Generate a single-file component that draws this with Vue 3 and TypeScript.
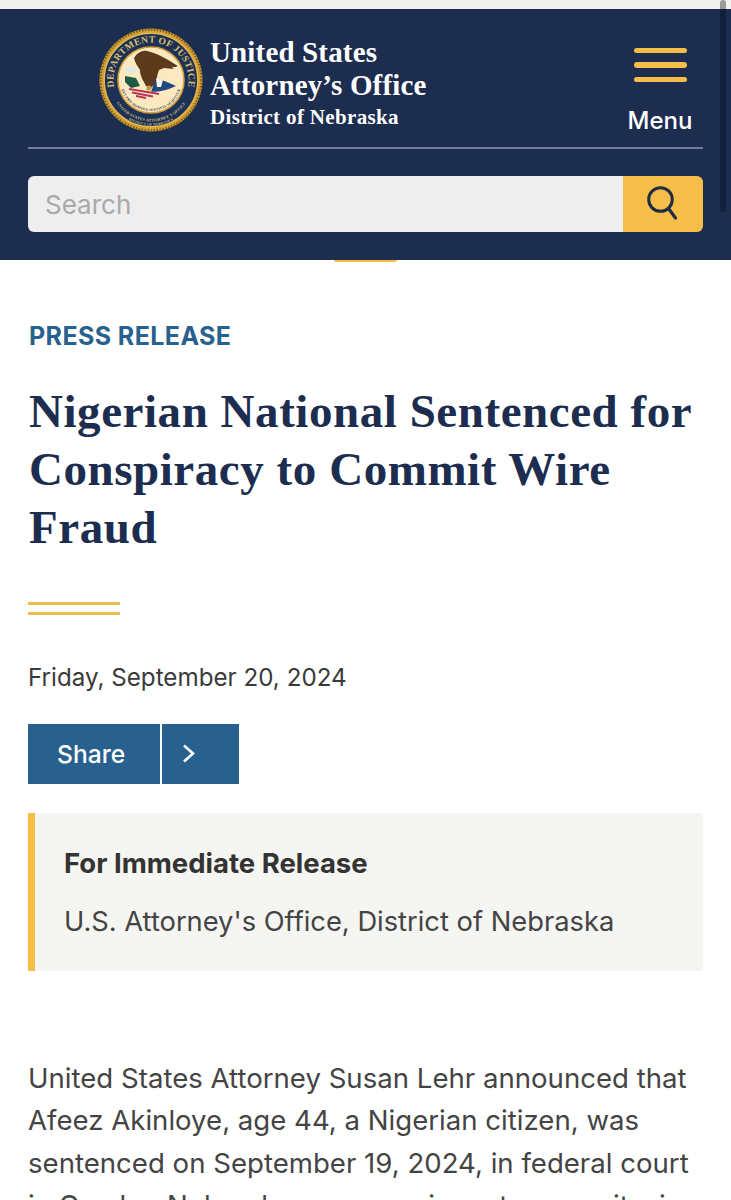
<script setup lang="ts">
const seal = 'DEPARTMENT OF JUSTICE'
</script>

<template>
  <div class="page">
    <div class="topstrip"></div>
    <header class="hdr">
      <div class="brandrow">
        <div class="brand">
          <svg class="seal" viewBox="0 0 104 104" aria-hidden="true">
            <defs>
              <path id="arcTop" d="M 18 67.8 A 37.5 37.5 0 1 1 86 67.8" />
              <path id="arcBot" d="M 13 66.2 A 41.5 41.5 0 0 0 91 66.2" />
              <path id="arcBot2" d="M 14.7 78.1 A 45.5 45.5 0 0 0 89.3 78.1" />
              <path id="arcIn" d="M 21 52 A 31 31 0 0 0 83 52" />
            </defs>
            <circle cx="52" cy="52" r="51.5" fill="#d09f36" />
            <circle cx="52" cy="52" r="50.4" fill="none" stroke="#7d5a1c" stroke-width="2" stroke-dasharray="1.5 1.5" />
            <circle cx="52" cy="52" r="46.8" fill="#1d3157" stroke="#e6b94f" stroke-width="1.4" />
            <text class="sealtext" fill="#dcbf6e" font-size="9.6"><textPath href="#arcTop" startOffset="50%" text-anchor="middle">{{ seal }}</textPath></text>
            <text class="sealtext" fill="#d8c583" font-size="3.9"><textPath href="#arcBot" startOffset="50%" text-anchor="middle">UNITED STATES ATTORNEY'S OFFICE</textPath></text>
            <text class="sealtext" fill="#d8c583" font-size="3.3"><textPath href="#arcBot2" startOffset="50%" text-anchor="middle">DISTRICT OF NEBRASKA</textPath></text>
            <circle cx="52" cy="52" r="33" fill="#fde9bf" stroke="#cf9f3b" stroke-width="1.6" />
            <path d="M24 41 L35 38 L40 44 L30 46 Z" fill="#e6e8e2" />
            <path d="M35 30 C38 25 43 22 48 23 C58 25 68 31 79 38 C78 39 75 39 73 39 L75 41 C71 41 68 40 65 40 L60 42 C58 47 58 51 56 56 L52 60 L47 58 C44 52 41 48 41 42 C39 39 36 35 35 30 Z" fill="#5e3a1d" />
            <path d="M26 48 L37 50 L41 58 L32 60 L26 54 Z" fill="#1f5c43" />
            <path d="M57 50 L68 54 L77 58 L70 61 C64 63 58 64 52 64 Z" fill="#224a80" />
            <path d="M57 50 L64 52 L62 59 L58 59 Z" fill="#f6f3e8" />
            <path d="M28 60 L62 65 C54 70 46 71 40 70 C34 68 31 64 28 60 Z" fill="#f7ecdf" />
            <path d="M30 61 L60 66 M33 64.5 L54 68.5 M37 68 L47 70" stroke="#bb3748" stroke-width="2" fill="none" />
            <circle cx="50" cy="60" r="2.6" fill="#c2983c" />
            <text class="sealtext" fill="#2c3345" font-size="3.6"><textPath href="#arcIn" startOffset="50%" text-anchor="middle">QUI PRO DOMINA JUSTITIA SEQUITUR</textPath></text>
          </svg>
          <div class="names">
            <div class="n1">United States</div>
            <div class="n1">Attorney’s Office</div>
            <div class="n2">District of Nebraska</div>
          </div>
        </div>
        <div class="menu">
          <div class="bars"><i></i><i></i><i></i></div>
          <div class="menulabel">Menu</div>
        </div>
      </div>
      <div class="searchrow">
        <div class="searchbox">Search</div>
        <div class="searchbtn">
          <svg width="34" height="36" viewBox="0 0 34 36" aria-hidden="true">
            <circle cx="14.5" cy="13.5" r="11.8" fill="none" stroke="#1f2c42" stroke-width="3" />
            <path d="M22.5 22.5 L29.5 32" stroke="#1f2c42" stroke-width="3.2" stroke-linecap="round" />
          </svg>
        </div>
      </div>
      <span class="tab"></span>
      <span class="scroll"></span>
    </header>

    <main class="main">
      <div class="eyebrow">PRESS RELEASE</div>
      <h1 class="title">Nigerian National Sentenced for Conspiracy to Commit Wire Fraud</h1>
      <div class="rule"></div>
      <div class="date">Friday, September 20, 2024</div>
      <div class="share">
        <div class="sharebtn">Share</div>
        <div class="sharearrow">
          <svg width="14" height="20" viewBox="0 0 14 20" aria-hidden="true"><path d="M2 1.5 L11 9.5 L2 17.5" fill="none" stroke="#fff" stroke-width="2.6" /></svg>
        </div>
      </div>
      <div class="notice">
        <div class="noticehead">For Immediate Release</div>
        <div class="noticebody">U.S. Attorney's Office, District of Nebraska</div>
      </div>
      <p class="body">United States Attorney Susan Lehr announced that Afeez Akinloye, age 44, a Nigerian citizen, was sentenced on September 19, 2024, in federal court in Omaha, Nebraska, on conspiracy to commit wire</p>
    </main>
  </div>
</template>

<style>
html, body { margin: 0; background: #fff; }
</style>

<style scoped>
.page { width: 731px; height: 1200px; overflow: hidden; position: relative; font-family: "Inter", "Liberation Sans", sans-serif; background: #fff; }
.topstrip { height: 9px; background: #f0f0ef; }
.hdr { position: relative; height: 251px; background: #1c2d50; padding: 0 28px; box-sizing: border-box; display: flex; flex-direction: column; }
.brandrow { height: 138px; border-bottom: 2px solid #6f7f9d; box-sizing: content-box; display: flex; justify-content: space-between; }
.brand { display: flex; align-items: center; gap: 7px; margin-left: 71px; height: 142px; }
.seal { width: 104px; height: 104px; flex: none; }
.sealtext { font-family: "Liberation Serif", serif; font-weight: 700; letter-spacing: .3px; }
.names { font-family: "Liberation Serif", serif; color: #fff; font-weight: 700; padding-top: 8px; }
.n1 { font-size: 29px; line-height: 33px; letter-spacing: .15px; }
.n2 { font-size: 21px; line-height: 30px; letter-spacing: .35px; }
.menu { width: 86px; display: flex; flex-direction: column; align-items: center; padding-top: 39px; }
.bars { display: flex; flex-direction: column; gap: 9px; }
.bars i { display: block; width: 53px; height: 5.4px; border-radius: 3px; background: #f6bd49; }
.menulabel { color: #fff; font-size: 24px; font-weight: 500; margin-top: 24px; line-height: 30px; }
.searchrow { display: flex; margin-top: 27px; height: 56px; }
.searchbox { flex: 1; background: #eeeeee; border-radius: 6px 0 0 6px; color: #a9a9a9; font-size: 26px; line-height: 58px; padding-left: 17px; }
.searchbtn { width: 80px; background: #f6bd49; border-radius: 0 6px 6px 0; display: flex; align-items: center; justify-content: center; }
.tab { position: absolute; left: 334px; top: 251px; width: 63px; height: 2px; background: #f6bd49; border-radius: 0 0 4px 4px; }
.scroll { position: absolute; left: 720px; top: -9px; width: 6px; height: 212px; border-radius: 3px; background: linear-gradient(#9a9a9a 0 9px, #13203c 9px); }
.main { padding: 0 28px; }
.eyebrow { margin: 60px 0 0 1px; color: #28618d; font-weight: 700; font-size: 25px; line-height: 32px; letter-spacing: .4px; }
.title { margin: 30px 0 0 1px; font-family: "Liberation Serif", serif; font-weight: 700; font-size: 47px; line-height: 58px; color: #1c2d50; letter-spacing: .55px; }
.rule { margin-top: 46px; width: 92px; height: 7px; border-top: 3.5px solid #ecbc50; border-bottom: 3.5px solid #ecbc50; }
.date { margin-top: 47px; font-size: 24.2px; line-height: 32px; color: #3a3a3a; }
.share { display: flex; gap: 2px; margin-top: 30px; height: 60px; }
.sharebtn { width: 103px; padding-left: 29px; background: #28618d; color: #fff; font-size: 24.6px; font-weight: 500; line-height: 60px; }
.sharearrow { width: 77px; background: #28618d; display: flex; align-items: center; padding-left: 20px; box-sizing: border-box; }
.notice { margin-top: 29px; height: 158px; background: #f5f5f2; border-left: 7px solid #f6bd49; padding: 29px 0 0 29px; box-sizing: border-box; }
.noticehead { font-size: 27.5px; font-weight: 700; line-height: 42px; color: #333; }
.noticebody { font-size: 27.3px; line-height: 32px; color: #444; margin-top: 22px; }
.body { margin: 86px 0 0; font-size: 27.6px; line-height: 42.4px; color: #444; }
</style>
